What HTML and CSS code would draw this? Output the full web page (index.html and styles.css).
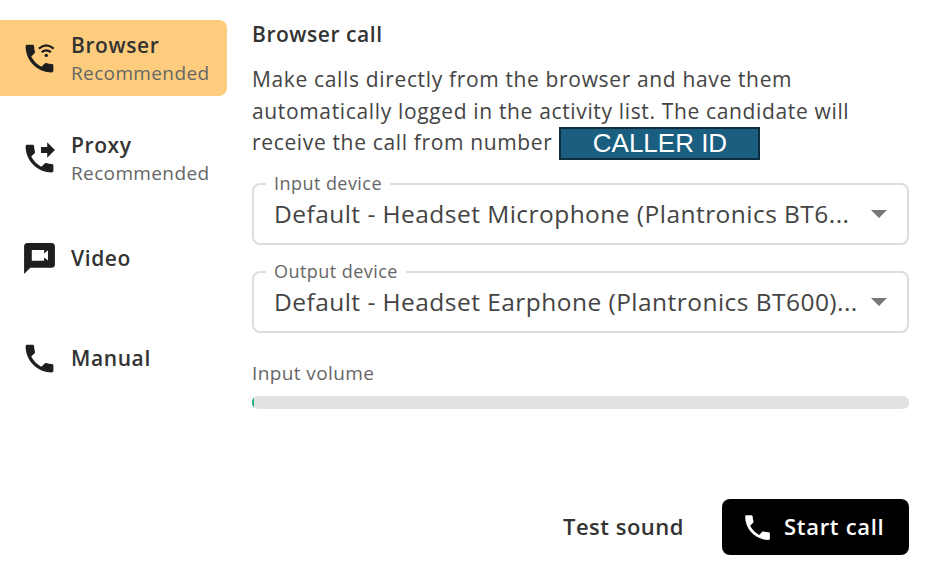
FILE: index.html
```html
<!DOCTYPE html>
<html lang="en">
<head>
    <meta charset="UTF-8">
    <meta name="viewport" content="width=device-width, initial-scale=1.0">
    <title>Browser call</title>
    <link rel="stylesheet" href="styles.css">
</head>
<body>
    <div id="dialog">
        <!-- Call type list -->
        <nav class="sidebar">
            <div class="nav-item active">
                <svg class="nav-icon" viewBox="0 0 24 24">
                    <path d="M20 15.5c-1.25 0-2.45-.2-3.57-.57-.35-.11-.74-.03-1.02.24l-2.2 2.2c-2.83-1.44-5.15-3.75-6.59-6.59l2.2-2.21c.28-.26.36-.65.25-1C8.7 6.45 8.5 5.25 8.5 4c0-.55-.45-1-1-1H4c-.55 0-1 .45-1 1 0 9.39 7.61 17 17 17 .55 0 1-.45 1-1v-3.5c0-.55-.45-1-1-1z"/>
                    <path class="wifi" d="M11.6 5.6c3-2.6 6.6-2.6 9.6 0M13.4 7.9c2-1.6 4-1.6 6 0"/>
                    <circle cx="16.4" cy="10" r="1.1"/>
                </svg>
                <div class="nav-text">
                    <span class="nav-title">Browser</span>
                    <span class="nav-sub">Recommended</span>
                </div>
            </div>
            <div class="nav-item">
                <svg class="nav-icon" viewBox="0 0 24 24">
                    <path d="M20 15.5c-1.25 0-2.45-.2-3.57-.57-.35-.11-.74-.03-1.02.24l-2.2 2.2c-2.83-1.44-5.15-3.75-6.59-6.59l2.2-2.21c.28-.26.36-.65.25-1C8.7 6.45 8.5 5.25 8.5 4c0-.55-.45-1-1-1H4c-.55 0-1 .45-1 1 0 9.39 7.61 17 17 17 .55 0 1-.45 1-1v-3.5c0-.55-.45-1-1-1z"/>
                    <path d="M17 11.5l5-5-5-5v3h-4v4h4v3z"/>
                </svg>
                <div class="nav-text">
                    <span class="nav-title">Proxy</span>
                    <span class="nav-sub">Recommended</span>
                </div>
            </div>
            <div class="nav-item">
                <svg class="nav-icon" viewBox="0 0 24 24">
                    <path fill-rule="evenodd" d="M20 2H4c-1.1 0-2 .9-2 2v18l4-4h14c1.1 0 2-.9 2-2V4c0-1.1-.9-2-2-2zM7 6.5h8v2.2l2.5-2v6.6l-2.5-2v2.2H7v-7z"/>
                </svg>
                <div class="nav-text">
                    <span class="nav-title">Video</span>
                </div>
            </div>
            <div class="nav-item">
                <svg class="nav-icon" viewBox="0 0 24 24">
                    <path d="M20 15.5c-1.25 0-2.45-.2-3.57-.57-.35-.11-.74-.03-1.02.24l-2.2 2.2c-2.83-1.44-5.15-3.75-6.59-6.59l2.2-2.21c.28-.26.36-.65.25-1C8.7 6.45 8.5 5.25 8.5 4c0-.55-.45-1-1-1H4c-.55 0-1 .45-1 1 0 9.39 7.61 17 17 17 .55 0 1-.45 1-1v-3.5c0-.55-.45-1-1-1z"/>
                </svg>
                <div class="nav-text">
                    <span class="nav-title">Manual</span>
                </div>
            </div>
        </nav>

        <!-- Browser call panel -->
        <main class="panel">
            <h2>Browser call</h2>
            <div class="intro">
                <p>Make calls directly from the browser and have them automatically logged in the activity list. The candidate will</p>
                <div class="caller-row">
                    <span>receive the call from number</span>
                    <span class="caller-id">CALLER ID</span>
                </div>
            </div>

            <div class="select-box first">
                <span class="select-label">Input device</span>
                <span class="select-value">Default - Headset Microphone (Plantronics BT6...</span>
                <span class="select-arrow"></span>
            </div>
            <div class="select-box">
                <span class="select-label">Output device</span>
                <span class="select-value">Default - Headset Earphone (Plantronics BT600)...</span>
                <span class="select-arrow"></span>
            </div>

            <div class="volume-label">Input volume</div>
            <div class="volume-bar"><div class="volume-level" style="width: 2px"></div></div>

            <div class="actions">
                <button class="btn-text">Test sound</button>
                <button class="btn-call">
                    <svg viewBox="0 0 24 24">
                        <path d="M20 15.5c-1.25 0-2.45-.2-3.57-.57-.35-.11-.74-.03-1.02.24l-2.2 2.2c-2.83-1.44-5.15-3.75-6.59-6.59l2.2-2.21c.28-.26.36-.65.25-1C8.7 6.45 8.5 5.25 8.5 4c0-.55-.45-1-1-1H4c-.55 0-1 .45-1 1 0 9.39 7.61 17 17 17 .55 0 1-.45 1-1v-3.5c0-.55-.45-1-1-1z"/>
                    </svg>
                    <span class="btn-label">Start call</span>
                </button>
            </div>
        </main>
    </div>
</body>
</html>
```

FILE: styles.css
```css
/* styles.css */
body {
margin: 0;
background-color: white;
font-family: "Open Sans", sans-serif;
color: #333;
}

#dialog {
display: flex;
height: 571px;
overflow: hidden;
}

.sidebar {
width: 227px;
padding-top: 20px;
display: flex;
flex-direction: column;
gap: 24px;
flex-shrink: 0;
}

.nav-item {
height: 76px;
display: flex;
align-items: center;
gap: 13px;
padding-left: 21px;
border-radius: 0 8px 8px 0;
}

.nav-item.active {
background-color: #fdcd7d;
}

.nav-icon {
width: 37px;
height: 37px;
fill: #1e1e1e;
flex-shrink: 0;
}

.wifi {
fill: none;
stroke: #1e1e1e;
stroke-width: 1.4;
}

.nav-text {
display: flex;
flex-direction: column;
}

.nav-title {
font-size: 21px;
font-weight: 600;
letter-spacing: 0.6px;
line-height: 29px;
}

.nav-sub {
font-size: 19px;
letter-spacing: 0.37px;
line-height: 26px;
color: #666;
}

.panel {
width: 657px;
margin-left: 25px;
}

h2 {
margin: 20px 0 0;
font-size: 21px;
font-weight: 600;
letter-spacing: 0.55px;
line-height: 28px;
}

.intro {
margin: 16px 0 0;
font-size: 21px;
letter-spacing: 0.65px;
line-height: 31.5px;
color: #444;
}

.intro p {
margin: 0;
}

.caller-row {
display: flex;
align-items: flex-start;
gap: 7px;
}

.caller-id {
width: 197px;
border: 2px solid #0f2d40;
background-color: #1a5e80;
color: white;
font-family: "Liberation Sans", sans-serif;
font-size: 26px;
letter-spacing: 0;
line-height: 29px;
text-align: center;
}

.select-box {
position: relative;
height: 62px;
margin-top: 26px;
border: 2px solid #ddd;
border-radius: 8px;
box-sizing: border-box;
display: flex;
align-items: center;
padding: 0 20px;
}

.select-box.first {
margin-top: 23px;
}

.select-label {
position: absolute;
top: -13px;
left: 12px;
padding: 0 8px;
background-color: white;
font-size: 18px;
letter-spacing: 0.45px;
line-height: 22px;
color: #666;
}

.select-value {
flex: 1;
font-size: 24.5px;
letter-spacing: 0.46px;
line-height: 32px;
white-space: nowrap;
color: #444;
}

.select-arrow {
width: 0;
height: 0;
border-left: 8px solid transparent;
border-right: 8px solid transparent;
border-top: 8px solid #777;
}

.volume-label {
margin-top: 27px;
font-size: 19px;
letter-spacing: 0.4px;
line-height: 26px;
color: #666;
}

.volume-bar {
height: 13px;
margin-top: 10px;
background-color: #e2e2e2;
border-radius: 6px;
overflow: hidden;
}

.volume-level {
height: 100%;
background-color: #1db27e;
}

.actions {
display: flex;
justify-content: flex-end;
align-items: center;
gap: 38px;
margin-top: 90px;
}

button {
font-family: "Open Sans", sans-serif;
font-size: 22px;
font-weight: 600;
letter-spacing: 0.5px;
border: none;
cursor: pointer;
}

.btn-text {
background: none;
padding: 0 0 2px;
color: #333;
}

.btn-call {
width: 187px;
height: 56px;
display: flex;
align-items: center;
gap: 10px;
padding: 0 0 0 19px;
background-color: black;
color: white;
border-radius: 8px;
}

.btn-label {
letter-spacing: 0.7px;
padding-bottom: 2px;
}

.btn-call svg {
width: 33px;
height: 33px;
fill: white;
}
```
